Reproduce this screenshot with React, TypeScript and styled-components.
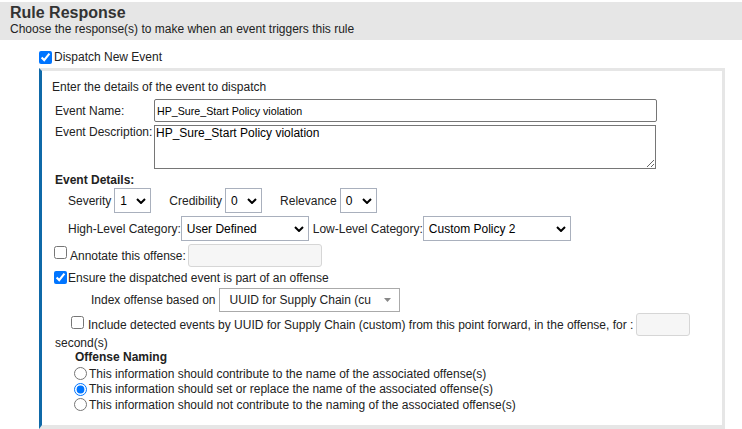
import React from 'react';
import styled, { createGlobalStyle } from 'styled-components';

const GlobalStyle = createGlobalStyle`
  html, body { margin: 0; padding: 0; background: #fff; }
  body {
    font-family: "Liberation Sans", Arial, sans-serif;
    font-size: 12px;
    color: #222;
  }
`;

const Page = styled.div`
  width: 742px;
  height: 429px;
  overflow: hidden;
`;

const Header = styled.div`
  margin-top: 2px;
  background: #e6e6e6;
  padding: 2px 10px 4px;
`;

const Title = styled.h1`
  margin: 0;
  font-size: 16px;
  font-weight: bold;
  line-height: 18px;
  color: #333;
`;

const Subtitle = styled.div`
  line-height: 14px;
  color: #222;
`;

const CheckRow = styled.label<{ $indent: number; $top: number; $h?: number }>`
  display: flex;
  align-items: center;
  height: ${(p) => p.$h || 14}px;
  line-height: 14px;
  padding-left: ${(p) => p.$indent}px;
  margin-top: ${(p) => p.$top}px;
  white-space: nowrap;
`;

const Check = styled.input.attrs({ type: 'checkbox' })<{ $shift?: number }>`
  margin: 0 3px 0 0;
  width: 13px;
  height: 13px;
  position: relative;
  top: ${(p) => p.$shift || 0}px;
`;

const Panel = styled.div`
  box-sizing: border-box;
  width: 686px;
  margin: 4px 0 0 39px;
  border: 3px solid #e6e6e6;
  border-left-color: #0f69a8;
  border-bottom-width: 4px;
  padding: 9px 10px 12px;
`;

const Line = styled.div<{ $indent?: number; $top?: number; $bold?: boolean }>`
  line-height: 14px;
  padding-left: ${(p) => p.$indent || 0}px;
  margin-top: ${(p) => p.$top || 0}px;
  font-weight: ${(p) => (p.$bold ? 'bold' : 'normal')};
`;

const FieldRow = styled.div<{ $top: number; $align?: string }>`
  display: flex;
  align-items: ${(p) => p.$align || 'center'};
  padding-left: 3px;
  margin-top: ${(p) => p.$top}px;
`;

const FieldLabel = styled.label`
  width: 99px;
  line-height: 14px;
  flex-shrink: 0;
`;

const TextInput = styled.input`
  box-sizing: border-box;
  width: 503px;
  height: 23px;
  border: 1px solid #767676;
  border-radius: 2px;
  padding: 0 2px;
  font-family: "Liberation Sans", Arial, sans-serif;
  font-size: 10.67px;
  color: #000;
`;

const TextArea = styled.textarea`
  box-sizing: border-box;
  width: 502px;
  height: 44px;
  border: 1px solid #767676;
  border-radius: 0;
  padding: 0 1px;
  margin: 0;
  font-family: "Liberation Sans", Arial, sans-serif;
  font-size: 12px;
  line-height: 14px;
  color: #000;
`;

const ControlRow = styled.div<{ $indent: number; $top: number; $h: number; $gap: number }>`
  display: flex;
  align-items: center;
  height: ${(p) => p.$h}px;
  padding-left: ${(p) => p.$indent}px;
  margin-top: ${(p) => p.$top}px;
  gap: ${(p) => p.$gap}px;
  white-space: nowrap;
`;

const Group = styled.div<{ $gap: number }>`
  display: flex;
  align-items: center;
  gap: ${(p) => p.$gap}px;
`;

const SelectBox = styled.div<{ $w: number }>`
  box-sizing: border-box;
  display: flex;
  align-items: center;
  justify-content: space-between;
  width: ${(p) => p.$w}px;
  height: 25px;
  border: 1px solid #a9b0bd;
  padding: 0 4px 0 5px;
  background: #fff;
  color: #000;
`;

const SoftInput = styled.input<{ $w: number }>`
  box-sizing: border-box;
  width: ${(p) => p.$w}px;
  height: 23px;
  margin: 0;
  border: 1px solid #d6d6d6;
  border-radius: 3px;
  background: #f6f6f6;
`;

const ComboBox = styled.div`
  box-sizing: border-box;
  display: flex;
  align-items: center;
  justify-content: space-between;
  width: 181px;
  height: 24px;
  border: 1px solid #aaa;
  padding: 0 8px 0 10px;
  background: #fff;
  color: #222;
`;

const RadioList = styled.div`
  margin-top: 2px;
  padding-left: 22px;
`;

const RadioRow = styled.label`
  display: flex;
  align-items: center;
  height: 15.5px;
  white-space: nowrap;
`;

const Radio = styled.input.attrs({ type: 'radio', name: 'naming' })`
  margin: 0 2px 0 0;
  width: 13px;
  height: 13px;
`;

const Chevron = () => (
  <svg width="10" height="6" viewBox="0 0 10 6">
    <path d="M1 1 L5 5 L9 1" fill="none" stroke="#000" strokeWidth="2" />
  </svg>
);

const Caret = () => (
  <svg width="7" height="4" viewBox="0 0 7 4">
    <path d="M0 0 L7 0 L3.5 4 Z" fill="#888" />
  </svg>
);

function Select({ value, width }: { value: string; width: number }) {
  return (
    <SelectBox $w={width}>
      <span>{value}</span>
      <Chevron />
    </SelectBox>
  );
}

const namingOptions = [
  'This information should contribute to the name of the associated offense(s)',
  'This information should set or replace the name of the associated offense(s)',
  'This information should not contribute to the naming of the associated offense(s)',
];

export default function App() {
  return (
    <Page>
      <GlobalStyle />
      <Header>
        <Title>Rule Response</Title>
        <Subtitle>Choose the response(s) to make when an event triggers this rule</Subtitle>
      </Header>

      <CheckRow $indent={39} $top={10}>
        <Check defaultChecked style={{ marginRight: 2 }} />
        Dispatch New Event
      </CheckRow>

      <Panel>
        <Line>Enter the details of the event to dispatch</Line>

        <FieldRow $top={5}>
          <FieldLabel>Event Name:</FieldLabel>
          <TextInput defaultValue="HP_Sure_Start Policy violation" />
        </FieldRow>
        <FieldRow $top={3} $align="flex-start">
          <FieldLabel>Event Description:</FieldLabel>
          <TextArea defaultValue="HP_Sure_Start Policy violation" />
        </FieldRow>

        <Line $indent={3} $top={4} $bold>Event Details:</Line>

        <ControlRow $indent={16} $top={1} $h={25} $gap={18}>
          <Group $gap={3}>
            <span>Severity</span>
            <Select value="1" width={37} />
          </Group>
          <Group $gap={3}>
            <span>Credibility</span>
            <Select value="0" width={37} />
          </Group>
          <Group $gap={3}>
            <span>Relevance</span>
            <Select value="0" width={37} />
          </Group>
        </ControlRow>

        <ControlRow $indent={16} $top={3} $h={25} $gap={4}>
          <Group $gap={0}>
            <span>High-Level Category:</span>
            <Select value="User Defined" width={128} />
          </Group>
          <Group $gap={0}>
            <span>Low-Level Category:</span>
            <Select value="Custom Policy 2" width={148} />
          </Group>
        </ControlRow>

        <ControlRow $indent={2} $top={3} $h={23} $gap={0}>
          <Check $shift={-3} />
          <span>Annotate this offense:</span>
          <SoftInput $w={134} style={{ marginLeft: 2 }} />
        </ControlRow>

        <CheckRow $indent={2} $top={4}>
          <Check defaultChecked $shift={-1} style={{ marginRight: 1 }} />
          Ensure the dispatched event is part of an offense
        </CheckRow>

        <ControlRow $indent={39} $top={3} $h={24} $gap={3}>
          <span>Index offense based on</span>
          <ComboBox>
            <span>UUID for Supply Chain (cu</span>
            <Caret />
          </ComboBox>
        </ControlRow>

        <ControlRow $indent={19} $top={1} $h={23} $gap={0}>
          <Check $shift={-2} style={{ marginRight: 4 }} />
          <span>Include detected events by UUID for Supply Chain (custom) from this point forward, in the offense, for :</span>
          <SoftInput $w={54} style={{ marginLeft: 3 }} />
        </ControlRow>
        <Line $indent={3}>second(s)</Line>

        <Line $indent={23} $bold>Offense Naming</Line>
        <RadioList>
          {namingOptions.map((text, i) => (
            <RadioRow key={i}>
              <Radio defaultChecked={i === 1} />
              {text}
            </RadioRow>
          ))}
        </RadioList>
      </Panel>
    </Page>
  );
}
